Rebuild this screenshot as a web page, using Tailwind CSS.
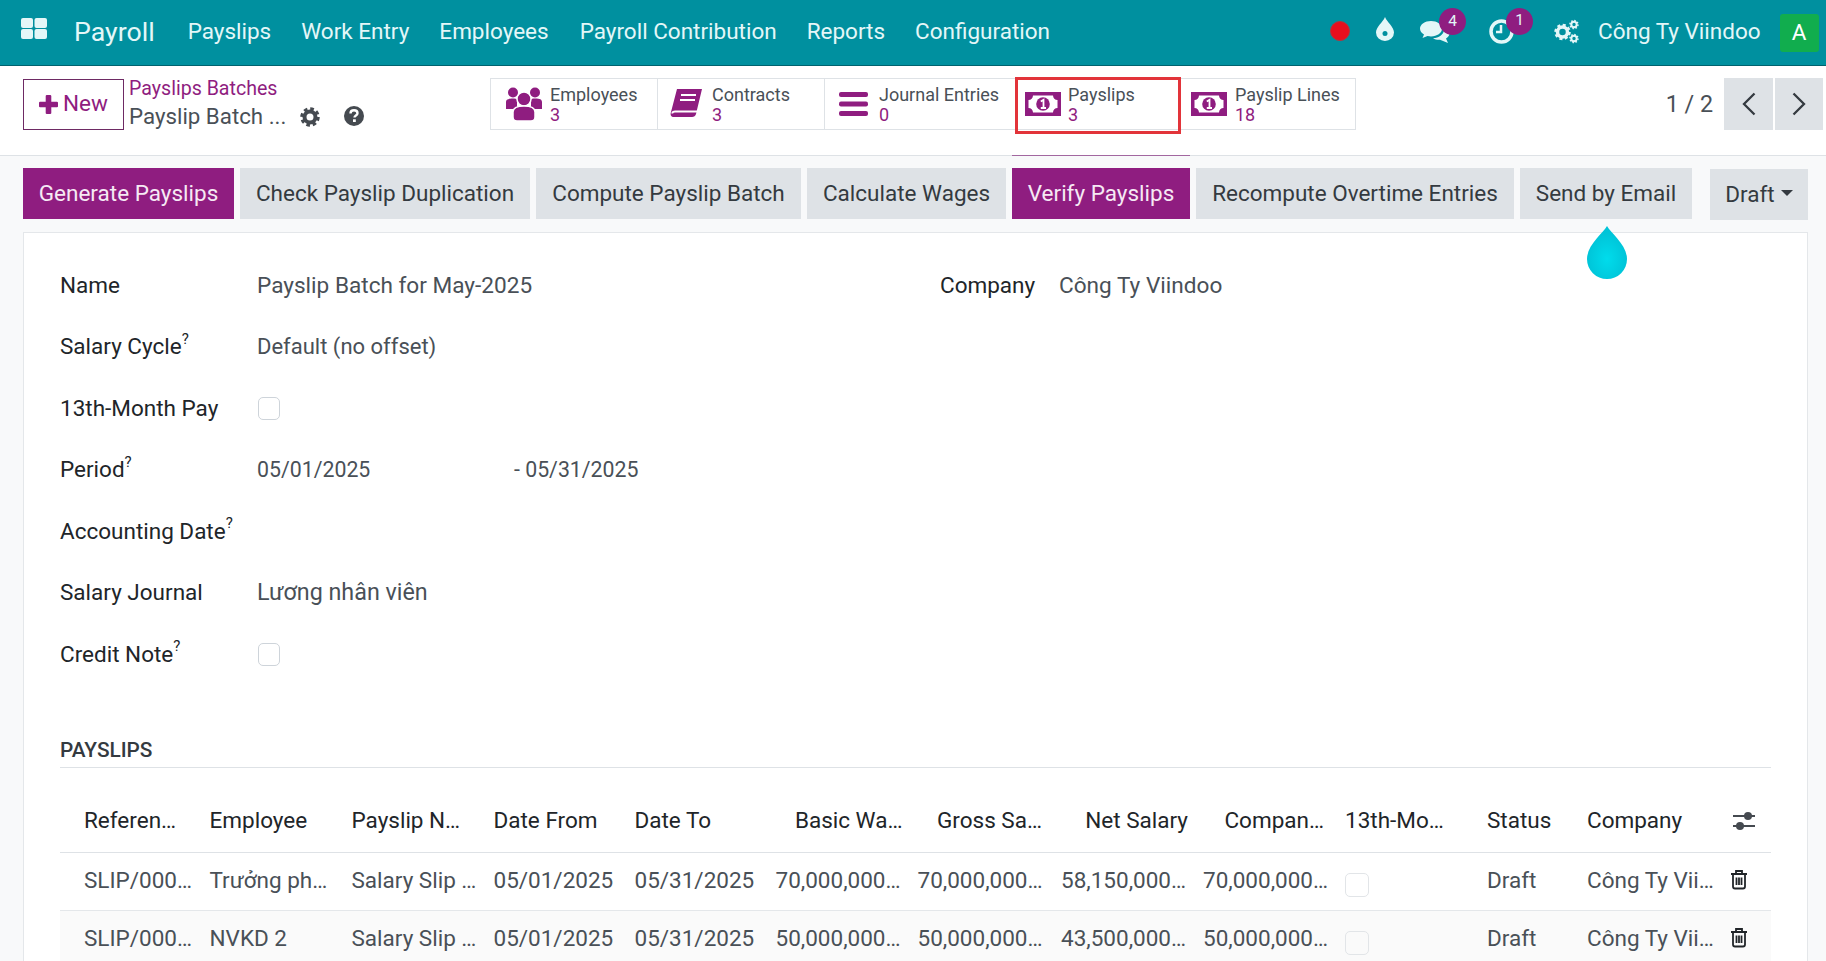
<!DOCTYPE html>
<html lang="en">
<head>
<meta charset="utf-8">
<title>Payroll</title>
<script src="https://cdn.jsdelivr.net/npm/@tailwindcss/browser@4"></script>
</head>
<body class="m-0 font-['Roboto',sans-serif] text-[22.5px] text-[#495057] bg-[#f8f9fa] overflow-hidden">
<div class="relative w-[1826px] h-[961px] overflow-hidden">

  <!-- top navbar -->
  <nav class="flex items-center h-[66px] bg-[#00909f] border-b border-[#00626e] text-[#e4f7f8] pb-[1px]">
    <svg class="ml-[21px] mt-[-8px] w-[26px] h-[21px] shrink-0" viewBox="0 0 26 21" fill="#e4f7f8"><rect x="0" y="0" width="12" height="10" rx="2"/><rect x="13.500" y="0" width="12.500" height="10" rx="2"/><rect x="0" y="11" width="12" height="10" rx="2"/><rect x="13.500" y="11" width="12.500" height="10" rx="2"/></svg>
    <span class="ml-[27px] text-[26.7px] leading-none">Payroll</span>
    <span class="ml-[33px]">Payslips</span>
    <span class="ml-[30px]">Work Entry</span>
    <span class="ml-[30px]">Employees</span>
    <span class="ml-[31px]">Payroll Contribution</span>
    <span class="ml-[30px]">Reports</span>
    <span class="ml-[30px]">Configuration</span>

    <div class="ml-auto flex items-center relative h-full w-[500px] shrink-0">
      <span class="ml-[4px] mt-[-3px] w-[20px] h-[20px] rounded-full bg-[#e80f1e] border border-[#b8323c] shrink-0"></span>
      <svg class="ml-[26px] w-[18px] h-[24px] mt-[-6px] shrink-0" viewBox="0 0 18 24"><path d="M9 0C11 5 18 10 18 15.500A9 8.500 0 0 1 0 15.500C0 10 7 5 9 0Z" fill="#e4f7f8"/><circle cx="9" cy="16.500" r="2.500" fill="#00909f"/></svg>
      <span class="relative ml-[26px] w-[30px] h-[24px] shrink-0">
        <svg class="w-[30px] h-[24px]" viewBox="0 0 30 24" fill="#e4f7f8"><path d="M11 1C5 1 0 4.500 0 8.500 0 11 1.500 13 4 14.500L2.500 18 7.500 16C9 16.300 10 16.400 11 16.400 17 16.400 22 13 22 8.500 22 4.500 17 1 11 1Z"/><path d="M24 10C23.500 14.500 19 18 13 18.300 15 19.500 17.500 20 20 19.800L28 23 26 18.500C28.500 17 29.500 15 29.500 13.500 29.500 12 27 10 24 10Z"/></svg>
        <span class="absolute left-[19px] top-[-12px] w-[27px] h-[27px] rounded-full bg-[#8f1d80] text-[15.5px] flex items-center justify-center">4</span>
      </span>
      <span class="relative ml-[39px] mt-[-2px] w-[25px] h-[25px] shrink-0">
        <svg class="w-[25px] h-[25px]" viewBox="0 0 25 25" fill="none" stroke="#e4f7f8"><circle cx="12.500" cy="12.500" r="10.500" stroke-width="3.500"/><path d="M12 6V13H7" stroke-width="2.500"/></svg>
        <span class="absolute left-[17px] top-[-11px] w-[27px] h-[27px] rounded-full bg-[#8f1d80] text-[15.5px] flex items-center justify-center">1</span>
      </span>
      <svg class="ml-[40px] mt-[-2px] w-[25px] h-[25px] shrink-0" viewBox="0 0 25 25" fill="none" stroke="#e4f7f8">
        <circle cx="8.500" cy="13" r="5" stroke-width="3.500"/><circle cx="8.500" cy="13" r="7" stroke-width="2.500" stroke-dasharray="3 2.500"/>
        <circle cx="20" cy="5.500" r="2.700" stroke-width="2"/><circle cx="20" cy="5.500" r="4" stroke-width="1.500" stroke-dasharray="1.500 1.600"/>
        <circle cx="20" cy="19.500" r="2.700" stroke-width="2"/><circle cx="20" cy="19.500" r="4" stroke-width="1.500" stroke-dasharray="1.500 1.600"/>
      </svg>
      <span class="ml-[19px] whitespace-nowrap">Công Ty Viindoo</span>
      <span class="ml-[19px] mt-[1px] w-[39px] h-[38px] rounded-[3px] bg-[#11ad4e] text-white flex items-center justify-center shrink-0">A</span>
    </div>
  </nav>

  <!-- control panel -->
  <div class="relative flex h-[90px] bg-white border-b border-[#dee2e6]">
    <div class="ml-[23px] mt-[13px] w-[101px] h-[51px] pb-[1px] border border-[#6e2a64] flex items-center justify-center text-[#8f1d80] shrink-0">
      <svg class="w-[19px] h-[19px] mr-[5px]" viewBox="0 0 17 17" fill="#8f1d80"><rect x="6" y="0" width="5" height="17" rx="1"/><rect x="0" y="6" width="17" height="5" rx="1"/></svg>
      <span>New</span>
    </div>
    <div class="ml-[5px] mt-[11px] w-[360px] shrink-0">
      <div class="text-[19.6px] leading-[24px] text-[#8f1d80]">Payslips Batches</div>
      <div class="flex items-center h-[30px] mt-[1px]">
        <span class="text-[22.3px]">Payslip Batch ...</span>
        <svg class="ml-[14px] mt-[-1px] w-[20px] h-[20px]" viewBox="0 0 20 20" fill="none" stroke="#454a50"><circle cx="10" cy="10" r="5.500" stroke-width="4"/><circle cx="10" cy="10" r="8" stroke-width="3.500" stroke-dasharray="3.500 2.780"/></svg>
        <svg class="ml-[24px] mt-[-3px] w-[20px] h-[20px]" viewBox="0 0 20 20"><circle cx="10" cy="10" r="10" fill="#454a50"/><path d="M6.500 7.500C6.500 5.500 8 4.300 10 4.300S13.500 5.500 13.500 7.300C13.500 9.500 10.500 9.500 10.500 11.500" fill="none" stroke="#fff" stroke-width="2.400"/><rect x="9" y="13.300" width="2.800" height="2.700" fill="#fff"/></svg>
      </div>
    </div>

    <div class="absolute left-[490px] top-[12px] flex h-[52px] border border-[#dee2e6] text-[18px] leading-[20px]">
      <div class="w-[167px] h-full flex items-center border-r border-[#dee2e6]">
        <svg class="ml-[15px] w-[36px] h-[34px] shrink-0" viewBox="0 0 36 34" fill="#8f1d80"><circle cx="7" cy="5.500" r="5"/><circle cx="29" cy="5.500" r="5"/><path d="M0 22V15C0 12.500 2 11.500 7 11.500S11 13 11 15V22Z"/><path d="M36 22V15C36 12.500 34 11.500 29 11.500S25 13 25 15V22Z"/><circle cx="18" cy="12" r="7" stroke="#fff" stroke-width="1.500"/><path d="M7 30V25C7 21 11 19 18 19S29 21 29 25V30C29 32.500 27 34 25 34H11C9 34 7 32.500 7 30Z" stroke="#fff" stroke-width="1.500"/></svg>
        <div class="ml-[8px] mt-[2px]"><div>Employees</div><div class="text-[#8f1d80]">3</div></div>
      </div>
      <div class="w-[167px] h-full flex items-center border-r border-[#dee2e6]">
        <svg class="ml-[12px] w-[32px] h-[30px] shrink-0" viewBox="0 0 32 30"><path d="M7 0H32L26 25C25.500 27 24 28 22 28H4C1 28 0 26 1 23Z" fill="#8f1d80"/><path d="M2.500 24.500C2 23 4 22.500 5 22.500H27.500" fill="none" stroke="#fff" stroke-width="2"/><path d="M11 6H26M10 11H25" stroke="#fff" stroke-width="2"/></svg>
        <div class="ml-[10px] mt-[2px]"><div>Contracts</div><div class="text-[#8f1d80]">3</div></div>
      </div>
      <div class="w-[191px] h-full flex items-center border-r border-[#dee2e6]">
        <svg class="ml-[14px] w-[29px] h-[24px] shrink-0" viewBox="0 0 29 24" fill="#8f1d80"><rect x="0" y="0" width="29" height="5" rx="2"/><rect x="0" y="9.500" width="29" height="5" rx="2"/><rect x="0" y="19" width="29" height="5" rx="2"/></svg>
        <div class="ml-[11px] mt-[2px]"><div class="whitespace-nowrap">Journal Entries</div><div class="text-[#8f1d80]">0</div></div>
      </div>
      <div class="w-[165px] h-full flex items-center">
        <svg class="ml-[9px] w-[36px] h-[24px] shrink-0" viewBox="0 0 36 24"><rect width="36" height="24" fill="#8f1d80"/><path d="M8 3.500H28C28 6 30 8 32.500 8V16C30 16 28 18 28 20.500H8C8 18 6 16 3.500 16V8C6 8 8 6 8 3.500Z" fill="#fff"/><circle cx="18" cy="12" r="6.800" fill="#8f1d80"/><path d="M15.800 9.500L18.500 7.800V16M15.800 16H21" fill="none" stroke="#fff" stroke-width="1.800"/></svg>
        <div class="ml-[7px] mt-[2px]"><div>Payslips</div><div class="text-[#8f1d80]">3</div></div>
      </div>
      <div class="w-[174px] h-full flex items-center">
        <svg class="ml-[10px] w-[36px] h-[24px] shrink-0" viewBox="0 0 36 24"><rect width="36" height="24" fill="#8f1d80"/><path d="M8 3.500H28C28 6 30 8 32.500 8V16C30 16 28 18 28 20.500H8C8 18 6 16 3.500 16V8C6 8 8 6 8 3.500Z" fill="#fff"/><circle cx="18" cy="12" r="6.800" fill="#8f1d80"/><path d="M15.800 9.500L18.500 7.800V16M15.800 16H21" fill="none" stroke="#fff" stroke-width="1.800"/></svg>
        <div class="ml-[8px] mt-[2px]"><div class="whitespace-nowrap">Payslip Lines</div><div class="text-[#8f1d80]">18</div></div>
      </div>
    </div>
    <div class="absolute left-[1015px] top-[11px] w-[166px] h-[57px] border-[3px] border-[#e2343a]"></div>

    <div class="ml-auto mt-[12px] flex h-[52px] items-center shrink-0">
      <span class="mr-[11px] text-[23.3px]">1 / 2</span>
      <span class="w-[49px] h-full bg-[#dee2e6] flex items-center justify-center"><svg class="w-[14px] h-[24px]" viewBox="0 0 14 24" fill="none" stroke="#343a40" stroke-width="2.300"><path d="M12.500 1.500L2 12 12.500 22.500"/></svg></span>
      <span class="ml-[2px] w-[48px] h-full bg-[#dee2e6] flex items-center justify-center"><svg class="w-[14px] h-[24px]" viewBox="0 0 14 24" fill="none" stroke="#343a40" stroke-width="2.300"><path d="M1.500 1.500L12 12 1.500 22.500"/></svg></span>
      <span class="w-[3px]"></span>
    </div>
    <div class="absolute left-[1012px] top-[89px] w-[178px] h-[1px] bg-[#a267a0]"></div>
  </div>

  <!-- action buttons -->
  <div class="flex items-start pl-[23px] pr-[18px] pt-[12px] h-[76px]">
    <button class="h-[51px] w-[211px] bg-[#8f1d80] text-[#f6e9f4]">Generate Payslips</button>
    <button class="ml-[6px] h-[51px] w-[290px] bg-[#dee2e6] text-[#343a40]">Check Payslip Duplication</button>
    <button class="ml-[6px] h-[51px] w-[265px] bg-[#dee2e6] text-[#343a40]">Compute Payslip Batch</button>
    <button class="ml-[6px] h-[51px] w-[199px] bg-[#dee2e6] text-[#343a40]">Calculate Wages</button>
    <button class="ml-[6px] h-[51px] w-[178px] bg-[#8f1d80] text-[#f6e9f4]">Verify Payslips</button>
    <button class="ml-[6px] h-[51px] w-[318px] bg-[#dee2e6] text-[#343a40]">Recompute Overtime Entries</button>
    <button class="ml-[6px] h-[51px] w-[172px] bg-[#dee2e6] text-[#343a40]">Send by Email</button>
    <button class="ml-auto mt-[1px] h-[51px] w-[98px] bg-[#dee2e6] text-[#343a40] flex items-center justify-center">Draft<span class="ml-[6px] w-0 h-0 border-x-[6px] border-x-transparent border-t-[6px] border-t-[#343a40] mb-[4px]"></span></button>
  </div>

  <!-- sheet -->
  <div class="mr-[18px] ml-[23px] h-[740px] bg-white border border-[#e4e7ea] pl-[36px] pr-[36px] pt-[22px]">
    <div class="flex">
      <div class="w-[880px] shrink-0">
        <div class="flex items-center h-[61.500px]"><span class="w-[197px] text-[#212529]">Name</span><span class="text-[22.6px]">Payslip Batch for May-2025</span></div>
        <div class="flex items-center h-[61.500px]"><span class="w-[197px] text-[#212529]">Salary Cycle<sup class="text-[15px] top-[-0.7em]">?</sup></span><span class="text-[22px] mt-[-1px]">Default (no offset)</span></div>
        <div class="flex items-center h-[61.500px]"><span class="w-[197px] text-[#212529]">13th-Month Pay</span><span class="ml-[1px] w-[22px] h-[23px] rounded-[5px] border border-[#ced4da]"></span></div>
        <div class="flex items-center h-[61.500px]"><span class="w-[197px] text-[#212529]">Period<sup class="text-[15px] top-[-0.7em]">?</sup></span><span class="w-[257px] text-[21.3px]">05/01/2025</span><span class="text-[21.3px]">- 05/31/2025</span></div>
        <div class="flex items-center h-[61.500px]"><span class="w-[197px] text-[#212529]">Accounting Date<sup class="text-[15px] top-[-0.7em]">?</sup></span></div>
        <div class="flex items-center h-[61.500px]"><span class="w-[197px] text-[#212529]">Salary Journal</span><span class="text-[23.3px] mt-[-1px]">Lương nhân viên</span></div>
        <div class="flex items-center h-[61.500px]"><span class="w-[197px] text-[#212529]">Credit Note<sup class="text-[15px] top-[-0.7em]">?</sup></span><span class="ml-[1px] w-[22px] h-[23px] rounded-[5px] border border-[#ced4da]"></span></div>
      </div>
      <div class="flex items-center h-[61.500px]"><span class="w-[119px] text-[#212529]">Company</span><span class="text-[22.6px]">Công Ty Viindoo</span></div>
    </div>

    <div class="mt-[47px] h-[35px] border-b border-[#dee2e6] text-[20.8px] leading-[36px] font-medium text-[#343a40] mb-[27px]"><span class="relative top-[-1px]">PAYSLIPS</span></div>

    <table class="table-fixed w-[1711px] border-collapse text-left whitespace-nowrap">
      <colgroup>
        <col class="w-[139px]"><col class="w-[142px]"><col class="w-[142px]"><col class="w-[141px]"><col class="w-[141px]"><col class="w-[148px]"><col class="w-[139.500px]"><col class="w-[146px]"><col class="w-[136px]"><col class="w-[142px]"><col class="w-[100px]"><col class="w-[144px]"><col>
      </colgroup>
      <thead class="text-[#212529]">
        <tr class="h-[58px] border-b border-[#dee2e6] [&>th]:pb-[4px]">
          <th class="pl-[24px] font-normal">Referen…</th>
          <th class="pl-[10.500px] font-normal">Employee</th>
          <th class="pl-[10.500px] font-normal">Payslip N…</th>
          <th class="pl-[10.500px] font-normal">Date From</th>
          <th class="pl-[10.500px] font-normal">Date To</th>
          <th class="pr-[10.500px] font-normal text-right">Basic Wa…</th>
          <th class="pr-[10.500px] font-normal text-right">Gross Sa…</th>
          <th class="pr-[10.500px] font-normal text-right">Net Salary</th>
          <th class="pr-[10.500px] font-normal text-right">Compan…</th>
          <th class="pl-[10.500px] font-normal">13th-Mo…</th>
          <th class="pl-[10.500px] font-normal">Status</th>
          <th class="pl-[10.500px] font-normal">Company</th>
          <th class="pl-[12px]"><svg class="w-[22px] h-[20px]" viewBox="0 0 22 20" fill="#454a50"><rect x="0" y="4" width="22" height="2"/><rect x="0" y="14" width="22" height="2"/><circle cx="15" cy="5" r="4"/><circle cx="7" cy="15" r="4"/></svg></th>
        </tr>
      </thead>
      <tbody>
        <tr class="h-[58px] border-b border-[#e4e7ea] [&>td]:pb-[2px]">
          <td class="pl-[24px]">SLIP/000…</td>
          <td class="pl-[10.500px]">Trưởng ph…</td>
          <td class="pl-[10.500px]">Salary Slip …</td>
          <td class="pl-[10.500px]">05/01/2025</td>
          <td class="pl-[10.500px]">05/31/2025</td>
          <td class="pl-[10.500px]">70,000,000…</td>
          <td class="pl-[4.500px]">70,000,000…</td>
          <td class="pl-[8.500px]">58,150,000…</td>
          <td class="pl-[4.500px]">70,000,000…</td>
          <td class="pl-[10.500px]"><span class="block mt-[8px] w-[24px] h-[24px] rounded-[5px] border border-[#e2e5e8]"></span></td>
          <td class="pl-[10.500px]">Draft</td>
          <td class="pl-[10.500px]">Công Ty Vii…</td>
          <td class="pl-[9px]"><svg class="w-[18px] h-[21px] mb-[2px]" viewBox="0 0 18 20" fill="none" stroke="#212529" stroke-width="1.800"><path d="M1 4.500H17M6 4.500V1.500H12V4.500M3 4.500V17C3 18.300 3.700 19 5 19H13C14.300 19 15 18.300 15 17V4.500M6.500 8V15.500M9 8V15.500M11.500 8V15.500"/></svg></td>
        </tr>
        <tr class="h-[58px] bg-[#fafafa] [&>td]:pb-[2px]">
          <td class="pl-[24px]">SLIP/000…</td>
          <td class="pl-[10.500px]">NVKD 2</td>
          <td class="pl-[10.500px]">Salary Slip …</td>
          <td class="pl-[10.500px]">05/01/2025</td>
          <td class="pl-[10.500px]">05/31/2025</td>
          <td class="pl-[10.500px]">50,000,000…</td>
          <td class="pl-[4.500px]">50,000,000…</td>
          <td class="pl-[8.500px]">43,500,000…</td>
          <td class="pl-[4.500px]">50,000,000…</td>
          <td class="pl-[10.500px]"><span class="block mt-[8px] w-[24px] h-[24px] rounded-[5px] border border-[#e2e5e8]"></span></td>
          <td class="pl-[10.500px]">Draft</td>
          <td class="pl-[10.500px]">Công Ty Vii…</td>
          <td class="pl-[9px]"><svg class="w-[18px] h-[21px] mb-[2px]" viewBox="0 0 18 20" fill="none" stroke="#212529" stroke-width="1.800"><path d="M1 4.500H17M6 4.500V1.500H12V4.500M3 4.500V17C3 18.300 3.700 19 5 19H13C14.300 19 15 18.300 15 17V4.500M6.500 8V15.500M9 8V15.500M11.500 8V15.500"/></svg></td>
        </tr>
      </tbody>
    </table>
  </div>

  <!-- floating drop -->
  <svg class="absolute left-[1587px] top-[226px] w-[40px] h-[53px]" viewBox="0 0 40 53"><defs><radialGradient id="d" cx="50%" cy="62%" r="50%"><stop offset="0" stop-color="#00dcec"/><stop offset="1" stop-color="#00c4d8"/></radialGradient></defs><path d="M20 0C24 7 40 19 40 33A20 20 0 0 1 0 33C0 19 16 7 20 0Z" fill="url(#d)"/></svg>
</div>
</body>
</html>
